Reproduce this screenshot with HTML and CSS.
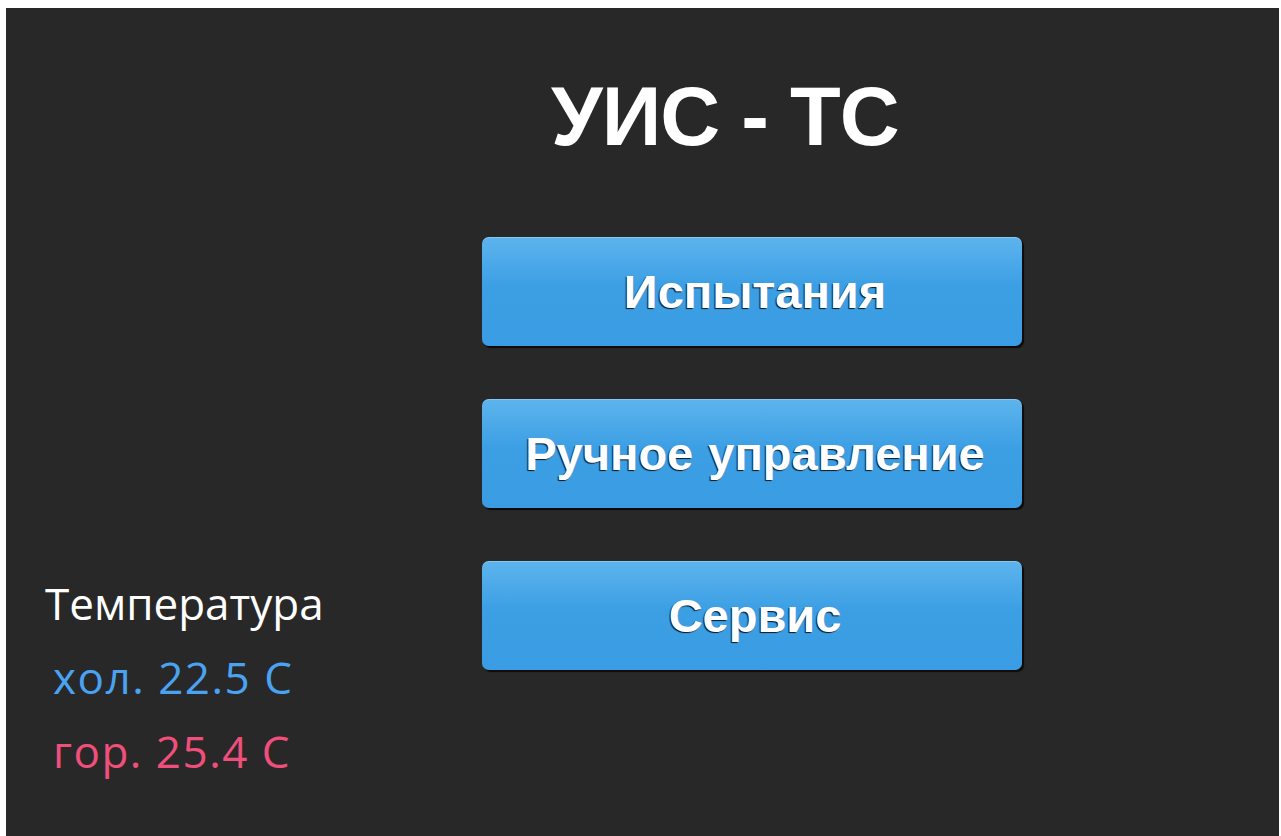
FILE: index.html
```html
<!DOCTYPE html>
<html lang="ru">
<head>
<meta charset="utf-8">
<title>УИС - ТС</title>
<link rel="stylesheet" href="styles.css">
</head>
<body>
<div class="screen">
  <aside class="side">
    <div class="temps">
      <div class="temps-label">Температура</div>
      <div class="temp temp-cold">хол. 22.5 C</div>
      <div class="temp temp-hot">гор. 25.4 C</div>
    </div>
  </aside>
  <main class="main">
    <h1 class="title">УИС - ТС</h1>
    <nav class="menu">
      <button class="menu-btn" type="button">Испытания</button>
      <button class="menu-btn" type="button">Ручное управление</button>
      <button class="menu-btn" type="button">Сервис</button>
    </nav>
  </main>
</div>
</body>
</html>
```
FILE: styles.css
```css
html, body {
  margin: 0;
  padding: 0;
  background: #ffffff;
}

body {
  padding: 8px 2px 0 6px;
  height: 836px;
  box-sizing: border-box;
  overflow: hidden;
}

.screen {
  display: flex;
  height: 828px;
  background: #282828;
  font-family: "Liberation Sans", Arial, sans-serif;
}

.side {
  width: 476px;
  display: flex;
  flex-direction: column;
  justify-content: flex-end;
}

.temps {
  padding: 0 0 48px 39px;
  font-family: "Open Sans", "Noto Sans", sans-serif;
  font-size: 44px;
  line-height: 74px;
}

.temps-label {
  color: #ffffff;
}

.temp {
  padding-left: 8px;
  letter-spacing: 1.5px;
}

.temp-cold {
  color: #4aa3f2;
}

.temp-hot {
  color: #ef4f7a;
}

.main {
  width: 540px;
  display: flex;
  flex-direction: column;
}

.title {
  margin: 59px 0 0 69px;
  font-size: 83px;
  line-height: 100px;
  font-weight: bold;
  letter-spacing: -1px;
  color: #ffffff;
}

.menu {
  margin-top: 70px;
  display: flex;
  flex-direction: column;
  gap: 53px;
}

.menu-btn {
  height: 109px;
  border: none;
  border-radius: 7px;
  padding: 0 0 0 6px;
  background: linear-gradient(to bottom, #5db4ed 0%, #3c9fe4 45%, #3a9de3 100%);
  box-shadow: inset 0 1px 0 rgba(255, 255, 255, 0.25), 2px 2px 1px #0a0a0a;
  color: #ffffff;
  font-family: "Liberation Sans", Arial, sans-serif;
  font-weight: bold;
  font-size: 47px;
  word-spacing: 2px;
  text-shadow: -1px 1px 1px rgba(0, 0, 0, 0.85);
  cursor: pointer;
}
```
